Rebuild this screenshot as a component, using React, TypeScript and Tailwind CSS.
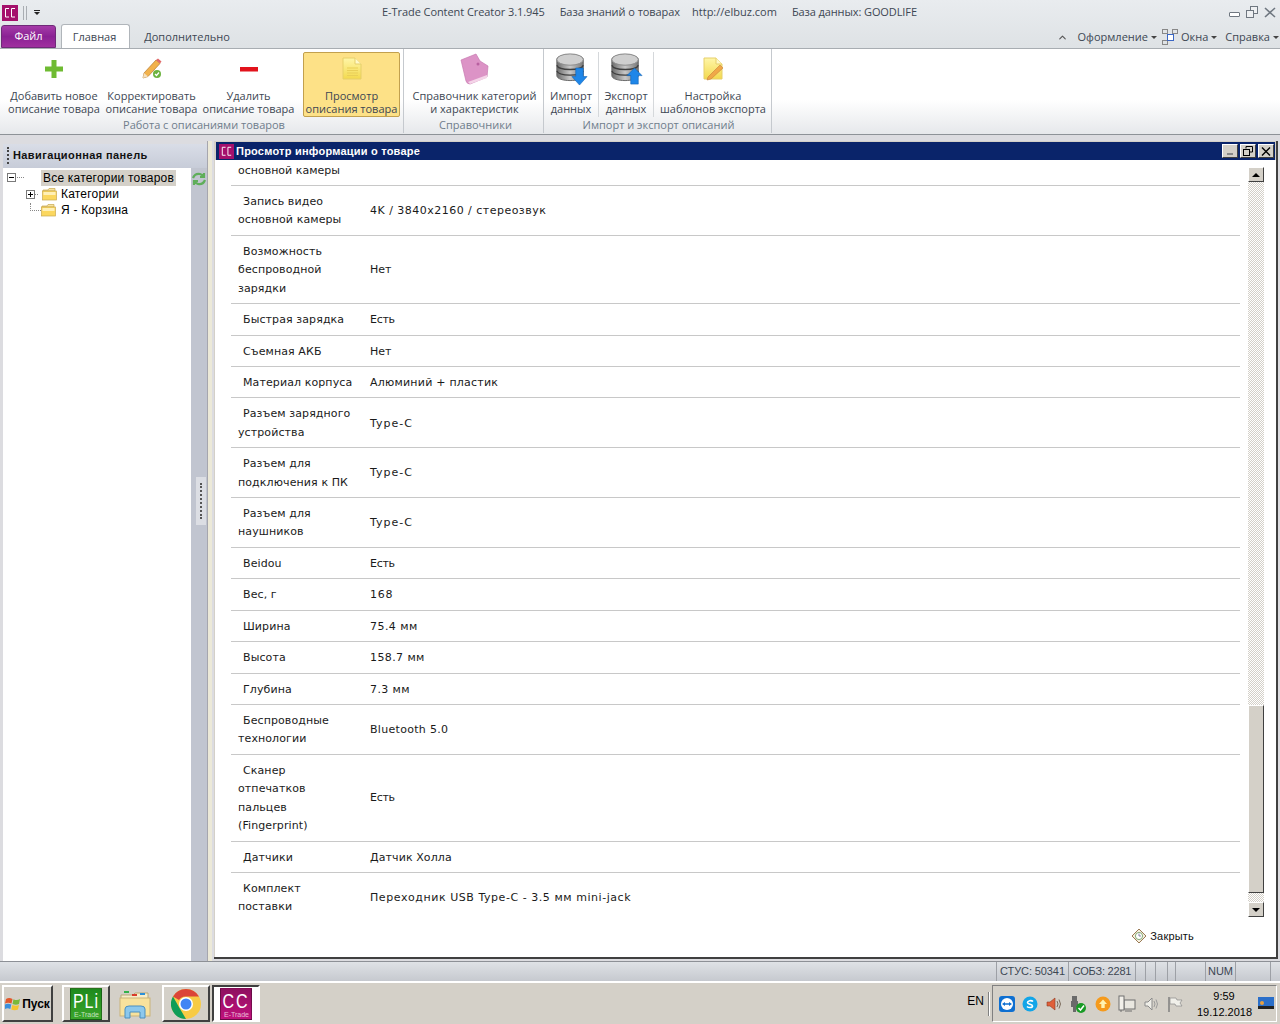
import { ChevronUp } from "lucide-react";
import type { ReactNode } from "react";

const rows: { label: string[]; value: string; cls?: string }[] = [
  { label: ["Запись видео", "основной камеры"], value: "4K / 3840x2160 / стереозвук", cls: "tracking-[0.48px]" },
  { label: ["Возможность", "беспроводной", "зарядки"], value: "Нет" },
  { label: ["Быстрая зарядка"], value: "Есть", cls: "tracking-[-0.3px]" },
  { label: ["Съемная АКБ"], value: "Нет" },
  { label: ["Материал корпуса"], value: "Алюминий + пластик", cls: "tracking-[0.22px]" },
  { label: ["Разъем зарядного", "устройства"], value: "Type-C", cls: "tracking-[1px]" },
  { label: ["Разъем для", "подключения к ПК"], value: "Type-C", cls: "tracking-[1px]" },
  { label: ["Разъем для", "наушников"], value: "Type-C", cls: "tracking-[1px]" },
  { label: ["Beidou"], value: "Есть", cls: "tracking-[-0.3px]" },
  { label: ["Вес, г"], value: "168", cls: "tracking-[0.7px]" },
  { label: ["Ширина"], value: "75.4 мм", cls: "tracking-[0.45px]" },
  { label: ["Высота"], value: "158.7 мм", cls: "tracking-[0.4px]" },
  { label: ["Глубина"], value: "7.3 мм", cls: "tracking-[0.4px]" },
  { label: ["Беспроводные", "технологии"], value: "Bluetooth 5.0", cls: "tracking-[0.3px]" },
  { label: ["Сканер", "отпечатков", "пальцев", "(Fingerprint)"], value: "Есть", cls: "tracking-[-0.3px]" },
  { label: ["Датчики"], value: "Датчик Холла", cls: "tracking-[0.1px]" },
  { label: ["Комплект", "поставки"], value: "Переходник USB Type-C - 3.5 мм mini-jack", cls: "tracking-[0.55px]" },
];

const raised =
  "border border-t-white border-l-white border-r-[#404040] border-b-[#404040] bg-[#d4d0c8]";

function CcLogo({ size = 16 }: { size?: number }) {
  return (
    <svg width={size} height={size} viewBox="0 0 16 16" className="shrink-0">
      <rect width="16" height="16" fill="#a5106c" />
      <path d="M7 3.5H3.5V12H7M13 3.5H9.5V12H13" fill="none" stroke="#fff" strokeWidth="1" />
    </svg>
  );
}

function RibbonButton({
  icon,
  lines,
  width,
  active,
}: {
  icon: ReactNode;
  lines: string[];
  width: number;
  active?: boolean;
}) {
  return (
    <div
      style={{ width }}
      className={`flex h-[65px] shrink-0 flex-col items-center ${
        active ? "rounded-[2px] border border-[#c2a04e] bg-[#fde187] pt-0" : "pt-[1px]"
      }`}
    >
      <div className="flex h-[31px] items-center justify-center">{icon}</div>
      <div className="mt-[5px] text-center text-[11px] leading-[13px] whitespace-nowrap text-[#3d4753]">
        {lines.map((l) => (
          <div key={l}>{l}</div>
        ))}
      </div>
    </div>
  );
}

function RibbonGroup({
  title,
  width,
  children,
  titleCls = "",
}: {
  title: string;
  width: number;
  children: ReactNode;
  titleCls?: string;
}) {
  return (
    <div style={{ width }} className="flex h-[84px] shrink-0 flex-col border-r border-[#c5c9ce]">
      <div className="flex h-[69px] items-start pt-[3px]">{children}</div>
      <div className={`text-center text-[11px] leading-[13px] text-[#6f7d8c] ${titleCls}`}>{title}</div>
    </div>
  );
}

function DbIcon({ up }: { up?: boolean }) {
  return (
    <svg width="34" height="34" viewBox="0 0 36 36">
      <defs>
        <linearGradient id={up ? "dbu" : "dbd"} x1="0" x2="1" y1="0" y2="0">
          <stop offset="0" stopColor="#6b6b6b" />
          <stop offset="0.5" stopColor="#c8c8c8" />
          <stop offset="1" stopColor="#777" />
        </linearGradient>
      </defs>
      <path d="M3 8C3 1 31 1 31 8V25C31 32 3 32 3 25Z" fill={`url(#${up ? "dbu" : "dbd"})`} stroke="#666" />
      <ellipse cx="17" cy="8" rx="14" ry="6" fill="#cfcfcf" stroke="#8a8a8a" />
      <path d="M3 14C5 20 29 20 31 14M3 20C5 26 29 26 31 20" fill="none" stroke="#3f3f3f" strokeWidth="1.5" />
      {up ? (
        <path d="M27 17L35 25H31V34H23V25H19Z" fill="#1e86e8" stroke="#0f62b5" strokeWidth="0.6" />
      ) : (
        <path d="M23 17H31V26H35L27 35L19 26H23Z" fill="#1e86e8" stroke="#0f62b5" strokeWidth="0.6" />
      )}
    </svg>
  );
}

function NoteIcon({ pencil }: { pencil?: boolean }) {
  return (
    <svg width="22" height="24" viewBox="0 0 22 24">
      <defs>
        <linearGradient id={pencil ? "nt2" : "nt1"} x1="0" x2="0" y1="0" y2="1">
          <stop offset="0" stopColor="#fff6a8" />
          <stop offset="1" stopColor="#f3d94e" />
        </linearGradient>
      </defs>
      <path d="M2 1H14L20 7V22H2Z" fill={`url(#${pencil ? "nt2" : "nt1"})`} stroke="#e6cf6a" />
      <path d="M14 1V7H20" fill="#fff9c9" stroke="#e6cf6a" />
      {pencil ? (
        <path d="M6 20L18 8L21 11L9 22L5 23Z" fill="#f0a848" stroke="#c9803a" strokeWidth="0.6" />
      ) : (
        <path d="M6 11H17M6 13.5H17M6 16H17M6 18.5H17" stroke="#e9cf58" />
      )}
    </svg>
  );
}

function FolderIcon() {
  return (
    <svg width="15" height="14" viewBox="0 0 15 14" className="shrink-0">
      <path d="M1 3H6L7 1.5H13V4H1Z" fill="#f7e4a0" stroke="#c9a84f" strokeWidth="0.7" />
      <rect x="0.5" y="4" width="14" height="9" fill="#fbd75f" stroke="#c9a84f" strokeWidth="0.7" />
      <rect x="1.5" y="5" width="12" height="3" fill="#fff0b8" />
    </svg>
  );
}

function TreeBox({ plus }: { plus?: boolean }) {
  return (
    <span className="relative block h-[9px] w-[9px] shrink-0 border border-[#7a7a7a] bg-white">
      <span className="absolute top-[3px] left-[1px] h-px w-[5px] bg-black" />
      {plus && <span className="absolute top-[1px] left-[3px] h-[5px] w-px bg-black" />}
    </span>
  );
}

function WinBtn({ children }: { children: ReactNode }) {
  return <div className={`flex h-[14px] w-[16px] items-center justify-center ${raised}`}>{children}</div>;
}

function Tile({ text, bg, trackCls }: { text: string; bg: string; trackCls: string }) {
  return (
    <div className={`flex h-[32px] w-[32px] flex-col items-center border border-black/30 leading-none text-white ${bg}`}>
      <span className={`mt-[3px] h-[18px] origin-top scale-y-[1.25] text-[16px] font-light ${trackCls}`}>{text}</span>
      <span className="mt-[1px] w-full pr-[2px] text-right text-[7px] text-white/70">E-Trade</span>
    </div>
  );
}

const tray = [
  <svg key="tv" width="16" height="16" viewBox="0 0 16 16">
    <rect width="16" height="16" rx="3" fill="#0e6fd1" />
    <circle cx="8" cy="8" r="6" fill="#fff" />
    <path d="M3 8L6 6V7.2H10V6L13 8L10 10V8.8H6V10Z" fill="#0e6fd1" />
  </svg>,
  <svg key="sk" width="16" height="16" viewBox="0 0 16 16">
    <circle cx="8" cy="8" r="7.5" fill="#12a5e8" />
    <path d="M11 5.5C9.5 4 5.5 4.5 5.5 6.5S10.5 8 10.5 10S6.5 12 5 10.5" fill="none" stroke="#fff" strokeWidth="1.6" />
  </svg>,
  <svg key="vol" width="16" height="16" viewBox="0 0 16 16">
    <path d="M1 6H4L9 2V14L4 10H1Z" fill="#e0603a" stroke="#8f3a22" strokeWidth="0.6" />
    <path d="M11 5Q13 8 11 11M13 3.5Q16 8 13 12.5" fill="none" stroke="#7a6a5a" />
  </svg>,
  <svg key="usb" width="18" height="18" viewBox="0 0 18 18">
    <path d="M3 1H8V6H9V12H7V17H4V12H2V6H3Z" fill="#6a6a6a" />
    <circle cx="12" cy="13" r="5" fill="#189a24" />
    <path d="M9.5 13L11.5 15L15 10.5" fill="none" stroke="#fff" strokeWidth="1.5" />
  </svg>,
  <svg key="up" width="16" height="16" viewBox="0 0 16 16">
    <circle cx="8" cy="8" r="7.5" fill="#f59a1c" />
    <path d="M8 3.5L12 8H9.7V12H6.3V8H4Z" fill="#fff3b0" />
  </svg>,
  <svg key="net" width="18" height="18" viewBox="0 0 18 18">
    <rect x="6" y="5" width="11" height="9" fill="#e9e7e0" stroke="#6f6f6f" />
    <rect x="1" y="1" width="5" height="14" fill="#f2f0ea" stroke="#6f6f6f" />
    <path d="M3 15V17M7 16H14" stroke="#6f6f6f" />
  </svg>,
  <svg key="snd" width="16" height="16" viewBox="0 0 16 16">
    <path d="M1 6H4L8 2V14L4 10H1Z" fill="#efeee8" stroke="#8b8b8b" />
    <path d="M10 5Q12 8 10 11M12 3.5Q15 8 12 12.5" fill="none" stroke="#9b9b9b" />
  </svg>,
  <svg key="flag" width="16" height="16" viewBox="0 0 16 16">
    <path d="M2 1V16" stroke="#7a7a7a" strokeWidth="1.4" />
    <path d="M3 2H9L10 4H15L13 7L15 10H9L8 8H3Z" fill="#f1f0ea" stroke="#8a8a8a" strokeWidth="0.7" />
  </svg>,
];

export default function App() {
  return (
    <div className="flex h-[1024px] w-[1280px] flex-col overflow-hidden bg-[#d4d0c8] font-['Open_Sans','Noto_Sans',sans-serif]">
      {/* title + tabs */}
      <div className="h-[48px] shrink-0 bg-gradient-to-b from-[#e9ecef] to-[#dee2e5]">
        <div className="relative flex h-[25px] items-center pl-[2px]">
          <CcLogo />
          <div className="ml-[5px] h-[14px] w-[4px] border-x border-[#a9adb2]" />
          <div className="ml-[7px] flex flex-col items-center gap-[1px]">
            <span className="h-px w-[6px] bg-[#222]" />
            <span className="h-0 w-0 border-x-[3px] border-t-[3px] border-x-transparent border-t-[#222]" />
          </div>
          <div className="absolute top-[4px] left-[382px] flex text-[11px] leading-[16px] whitespace-nowrap text-[#3d4753]">
            <span className="tracking-[-0.07px]">E-Trade Content Creator 3.1.945</span>
            <span className="ml-[15px] tracking-[-0.06px]">База знаний о товарах</span>
            <span className="ml-[12px]">http://elbuz.com</span>
            <span className="ml-[15px] tracking-[-0.1px]">База данных: GOODLIFE</span>
          </div>
          <div className="absolute top-[6px] right-[4px] flex items-center gap-[6px] text-[#5f6872]">
            <span className="mt-[5px] h-[5px] w-[11px] rounded-[1px] border border-[#6f7780] bg-white" />
            <svg width="12" height="12" viewBox="0 0 12 12" fill="none" stroke="#6f7780">
              <rect x="4.5" y="0.5" width="7" height="7" fill="#eef0f2" />
              <rect x="0.5" y="4.5" width="7" height="7" fill="#eef0f2" />
            </svg>
            <svg width="12" height="11" viewBox="0 0 12 11" fill="none" stroke="#6f7780" strokeWidth="1.6">
              <path d="M1 1L11 10M11 1L1 10" />
            </svg>
          </div>
        </div>
        <div className="relative flex h-[23px] items-end pl-[1px]">
          <div className="flex h-[23px] w-[55px] items-center justify-center rounded-t-[3px] border border-[#6f2a78] bg-gradient-to-b from-[#a63ba8] via-[#8a2194] to-[#a0309f] text-[11px] text-white">
            Файл
          </div>
          <div className="z-10 ml-[5px] flex h-[24px] w-[69px] items-center justify-center rounded-t-[3px] border border-b-0 border-[#b0b5ba] bg-white pt-[2px] pr-[2px] text-[11px] text-[#3d4753]">
            Главная
          </div>
          <div className="flex h-[23px] w-[114px] items-center justify-center pt-[2px] text-[11px] text-[#3d4753]">
            Дополнительно
          </div>
          <div className="absolute top-[4px] right-[1px] flex items-center text-[11px] leading-[16px] whitespace-nowrap text-[#3d4753]">
            <ChevronUp size={11} strokeWidth={2.4} className="mr-[10px] text-[#555]" />
            <span>Оформление</span>
            <span className="mx-[3px] h-0 w-0 border-x-[3px] border-t-[3px] border-x-transparent border-t-[#444]" />
            <svg width="16" height="16" viewBox="0 0 16 16" className="mx-[2px]" fill="none" stroke="#888">
              <rect x="0.5" y="0.5" width="5" height="4" />
              <rect x="10.5" y="0.5" width="5" height="4" />
              <rect x="0.5" y="11.5" width="5" height="4" />
              <rect x="5.5" y="5.5" width="6" height="6" fill="#fff" stroke="#3a66c4" />
            </svg>
            <span className="ml-[1px]">Окна</span>
            <span className="mx-[3px] h-0 w-0 border-x-[3px] border-t-[3px] border-x-transparent border-t-[#444]" />
            <span className="ml-[5px]">Справка</span>
            <span className="ml-[3px] h-0 w-0 border-x-[3px] border-t-[3px] border-x-transparent border-t-[#444]" />
          </div>
        </div>
      </div>

      {/* ribbon */}
      <div className="flex h-[87px] shrink-0 border-y border-t-[#a8adb2] border-b-[#8d9297] bg-gradient-to-b from-white from-60% to-[#e6e8eb] pl-[5px]">
        <RibbonGroup title="Работа с описаниями товаров" width={399}>
          <RibbonButton
            width={98}
            lines={["Добавить новое", "описание товара"]}
            icon={
              <svg width="20" height="20" viewBox="0 0 20 20">
                <path d="M7.5 1H12.5V7.5H19V12.5H12.5V19H7.5V12.5H1V7.5H7.5Z" fill="#6fbb32" />
              </svg>
            }
          />
          <RibbonButton
            width={97}
            lines={["Корректировать", "описание товара"]}
            icon={
              <svg width="22" height="22" viewBox="0 0 22 22">
                <path d="M2 20L3 15L15 2L19 5.5L7 18.5Z" fill="#f2b24c" stroke="#b57a30" strokeWidth="0.7" />
                <path d="M15 2L17 0.5L20.5 3.5L19 5.5Z" fill="#e06a6a" />
                <path d="M2 20L3 15L7 18.5Z" fill="#f5e2c0" />
                <circle cx="16" cy="16" r="4" fill="#6cb33f" />
                <path d="M14 16L15.5 17.5L18 14.5" fill="none" stroke="#fff" strokeWidth="1.2" />
              </svg>
            }
          />
          <RibbonButton
            width={97}
            lines={["Удалить", "описание товара"]}
            icon={
              <svg width="20" height="20" viewBox="0 0 20 20">
                <rect x="1" y="8" width="18" height="4.5" fill="#e2131c" />
              </svg>
            }
          />
          <div className="ml-[6px]">
            <RibbonButton width={97} active lines={["Просмотр", "описания товара"]} icon={<NoteIcon />} />
          </div>
        </RibbonGroup>
        <RibbonGroup title="Справочники" width={140} titleCls="pl-[4px]">
          <RibbonButton
            width={141}
            lines={["Справочник категорий", "и характеристик"]}
            icon={
              <svg width="30" height="32" viewBox="0 0 30 32">
                <path d="M1 7L16 1L20 8L28 13L27 24L10 31Q7 31 6 28Z" fill="#dc93c6" stroke="#c77ab0" strokeWidth="0.7" />
                <path d="M8 29L27 22V25L10 31Z" fill="#f4d4e8" />
                <circle cx="18" cy="11" r="1.5" fill="#b860a0" />
              </svg>
            }
          />
        </RibbonGroup>
        <RibbonGroup title="Импорт и экспорт описаний" width={228} titleCls="pl-[2px]">
          <div className="flex h-[65px] w-[55px] justify-center border-r border-[#d5d8db]">
            <RibbonButton width={56} lines={["Импорт", "данных"]} icon={<DbIcon />} />
          </div>
          <div className="flex h-[65px] w-[55px] justify-center border-r border-[#d5d8db]">
            <RibbonButton width={54} lines={["Экспорт", "данных"]} icon={<DbIcon up />} />
          </div>
          <RibbonButton width={118} lines={["Настройка", "шаблонов экспорта"]} icon={<NoteIcon pencil />} />
        </RibbonGroup>
      </div>

      {/* main */}
      <div className="flex h-[826px] shrink-0 bg-[#dcdce0] pt-[6px]">
        <div className="ml-[3px] flex h-[820px] w-[204px] shrink-0 flex-col pt-[3px]">
          <div className="flex h-[24px] shrink-0 items-center bg-gradient-to-b from-[#d9dde7] to-[#c7ccd8] pb-[2px] pl-[4px]">
            <span className="mr-[4px] h-[17px] w-[2px] border-l-2 border-dotted border-[#444]" />
            <span className="font-['Liberation_Sans',sans-serif] text-[11px] font-bold tracking-[0.4px] whitespace-nowrap text-[#111]">
              Навигационная панель
            </span>
          </div>
          <div className="flex min-h-0 flex-1">
            <div className="w-[188px] bg-white pt-[1px] font-['Liberation_Sans',sans-serif] text-[12px] tracking-[0.2px] text-black">
              <div className="flex h-[17px] items-center pl-[4px]">
                <TreeBox />
                <span className="ml-[1px] w-[7px] border-t border-dotted border-[#888]" />
                <span className="ml-[17px] bg-[#d4d0c8] px-[2px] leading-[16px] whitespace-nowrap">Все категории товаров</span>
              </div>
              <div className="relative flex h-[16px] items-center pl-[23px]">
                <TreeBox plus />
                <span className="w-[3px] border-t border-dotted border-[#888]" />
                <span className="ml-[4px]"><FolderIcon /></span>
                <span className="ml-[4px]">Категории</span>
              </div>
              <div className="flex h-[16px] items-center pl-[27px]">
                <span className="mt-[-7px] h-[8px] w-[11px] border-b border-l border-dotted border-[#888]" />
                <FolderIcon />
                <span className="ml-[5px]">Я - Корзина</span>
              </div>
            </div>
            <div className="flex w-[16px] flex-col items-center bg-[#c1c5d0] pt-[3px]">
              <svg width="16" height="16" viewBox="0 0 16 16" fill="none" stroke="#5fae5a" strokeWidth="2.2">
                <path d="M2 7Q4 2 9 3L13 5M13 2V6H9" />
                <path d="M14 9Q12 14 7 13L3 11M3 14V10H7" />
              </svg>
              <div className="mt-[290px] ml-[3px] flex h-[48px] w-[10px] justify-center bg-[#dcdee4] pt-[6px]">
                <span className="h-[36px] border-l-2 border-dotted border-[#555]" />
              </div>
            </div>
          </div>
        </div>
        <div className="w-[5px] shrink-0 border-l border-[#a6a6ae] bg-[#ece9d8]" />
        <div className="ml-[2px] flex h-[818px] w-[1064px] shrink-0 flex-col border-r-2 border-b-2 border-[#404040] bg-[#d4d0c8] pt-[1px] pl-[1px]">
          <div className="mx-[1px] flex h-[18px] shrink-0 items-center bg-[#0a246a] pr-[1px] pl-[3px] font-['Liberation_Sans',sans-serif]">
            <CcLogo size={15} />
            <span className="ml-[2px] flex-1 text-[11px] font-bold tracking-[0.22px] text-white">
              Просмотр информации о товаре
            </span>
            <div className="flex gap-[2px]">
              <WinBtn>
                <span className="mt-[6px] h-[2px] w-[6px] bg-[#888]" />
              </WinBtn>
              <WinBtn>
                <svg width="10" height="10" viewBox="0 0 10 10" fill="none" stroke="#000">
                  <path d="M3 2.5V0.5H9.5V6H7" strokeWidth="1" />
                  <rect x="0.5" y="3.5" width="6" height="6" />
                </svg>
              </WinBtn>
              <WinBtn>
                <svg width="10" height="9" viewBox="0 0 10 9" stroke="#000" strokeWidth="1.4">
                  <path d="M1 0.5L9 8.5M9 0.5L1 8.5" />
                </svg>
              </WinBtn>
            </div>
          </div>
          <div className="relative flex min-h-0 flex-1 flex-col bg-white font-['DejaVu_Sans',sans-serif] text-[11px] leading-[18.42px] text-[#1a1a1a]">
            <div className="ml-[16px] h-[760px] w-[1009px] shrink-0 overflow-hidden">
              <div className="flex h-[26px] items-end border-b border-[#c8c8c8] pb-[5px] pl-[7px]">
                основной камеры
              </div>
              {rows.map((r, i) => (
                <div
                  key={r.label[0] + r.value}
                  className={`flex items-center pt-[7px] pb-[5px] ${
                    i < rows.length - 1 ? "border-b border-[#c8c8c8]" : ""
                  }`}
                >
                  <div className="w-[139px] shrink-0 pl-[7px] tracking-[0.1px]">
                    {r.label.map((l, j) => (
                      <div key={l} className={j === 0 ? "pl-[5px]" : ""}>
                        {l}
                      </div>
                    ))}
                  </div>
                  <div className={r.cls}>{r.value}</div>
                </div>
              ))}
            </div>
            <div className="flex h-[37px] shrink-0 items-start justify-end pt-[7px] pr-[82px] font-['Liberation_Sans',sans-serif] text-[11px] tracking-[0.2px]">
              <svg width="16" height="16" viewBox="0 0 16 16" className="mt-[1px] mr-[3px]">
                <path d="M8 1L15 8L8 15L1 8Z" fill="#f6efdf" stroke="#9a7a55" />
                <circle cx="8" cy="8" r="3.6" fill="#fff" stroke="#6a9a5a" strokeWidth="0.8" />
                <path d="M8 5.5V8H10" stroke="#558" strokeWidth="0.7" fill="none" />
              </svg>
              <span className="leading-[18px] text-[#111]">Закрыть</span>
            </div>
            {/* scrollbar */}
            <div className="absolute top-[7px] left-[1033px] flex h-[750px] w-[16px] flex-col">
              <div className={`flex h-[15px] items-center justify-center ${raised}`}>
                <span className="h-0 w-0 border-x-[4px] border-b-[4px] border-x-transparent border-b-black" />
              </div>
              <div className="h-[523px] bg-[repeating-conic-gradient(#d4d0c8_0_25%,#fff_0_50%)] bg-[length:2px_2px]" />
              <div className={`h-[188px] ${raised}`} />
              <div className="h-[9px] bg-[repeating-conic-gradient(#d4d0c8_0_25%,#fff_0_50%)] bg-[length:2px_2px]" />
              <div className={`flex h-[15px] items-center justify-center ${raised}`}>
                <span className="h-0 w-0 border-x-[4px] border-t-[4px] border-x-transparent border-t-black" />
              </div>
            </div>
          </div>
        </div>
      </div>

      {/* status bar */}
      <div className="flex h-[20px] shrink-0 border-t border-[#8d9096] bg-gradient-to-b from-[#dfe2e6] to-[#c6c9cf] font-['Liberation_Sans',sans-serif] text-[11px] leading-[19px] text-[#3d4753]">
        <div className="w-[996px] shrink-0" />
        {[
          [72, "СТУС: 50341", "tracking-[-0.1px]"],
          [67, "СОБЗ: 2281", "tracking-[-0.2px]"],
          [10, "", ""],
          [10, "", ""],
          [12, "", ""],
          [8, "", ""],
          [30, "", ""],
          [30, "NUM", ""],
          [35, "", ""],
        ].map(([w, t, c], i) => (
          <div
            key={i}
            style={{ width: w as number }}
            className={`shrink-0 border-l border-[#9da0a6] text-center whitespace-nowrap ${c}`}
          >
            {t}
          </div>
        ))}
        <div className="flex-1 border-l border-[#9da0a6]" />
      </div>

      {/* taskbar */}
      <div className="flex h-[43px] shrink-0 items-center border-t-2 border-white bg-[#d4d0c8] pl-[2px] font-['Liberation_Sans',sans-serif]">
        <div className={`flex h-[37px] w-[51px] items-center justify-center gap-[1px] border-2 ${raised}`}>
          <svg width="16" height="16" viewBox="0 0 16 16">
            <path d="M1 3Q4 1 7.5 3L6.5 7.5Q3 6 0 7.5Z" fill="#e2582c" />
            <path d="M8.5 3.2Q12 5 15 3L14 8Q11 9.5 7.5 8Z" fill="#79b93a" />
            <path d="M0 8.5Q3 7 6.3 8.5L5.3 13Q2.5 11.5 0 13Z" fill="#3a8fdc" />
            <path d="M7.3 9Q11 10.5 14 9L13 13.5Q9.5 15 6.3 13.5Z" fill="#f4c430" />
          </svg>
          <span className="text-[12px] font-bold text-black">Пуск</span>
        </div>
        <div className={`ml-[9px] flex h-[37px] w-[48px] items-center justify-center border-2 ${raised}`}>
          <Tile text="PLi" bg="bg-gradient-to-b from-[#1d8a1d] to-[#3aa52a]" trackCls="tracking-[1px]" />
        </div>
        <div className="flex h-[37px] w-[50px] items-center justify-center">
          <svg width="32" height="32" viewBox="0 0 32 32">
            <path d="M2 7H14L16 5H29V12H2Z" fill="#f7edc8" stroke="#b9a878" />
            <rect x="5" y="3" width="5" height="2" fill="#33b24a" />
            <rect x="13" y="6" width="5" height="2" fill="#d93a2b" />
            <rect x="21" y="5" width="5" height="2" fill="#2b90d9" />
            <rect x="1" y="10" width="30" height="18" fill="#f8e29c" stroke="#c9b37a" />
            <path d="M6 30V21Q6 18 10 18H22Q26 18 26 21V30H21V24H11V30Z" fill="#8cc8ec" stroke="#4a8fc0" />
          </svg>
        </div>
        <div className={`ml-[2px] flex h-[37px] w-[48px] items-center justify-center border-2 ${raised}`}>
          <svg width="30" height="30" viewBox="0 0 30 30">
            <circle cx="15" cy="15" r="15" fill="#f7cb45" />
            <path d="M15 0A15 15 0 0 1 28 7.5H15A7.5 7.5 0 0 0 8 11L2 7.5A15 15 0 0 1 15 0Z" fill="#db4437" />
            <path d="M2 7.5L8.5 19L15 30A15 15 0 0 1 2 7.5Z" fill="#0f9d58" />
            <circle cx="15" cy="15" r="7" fill="#fff" />
            <circle cx="15" cy="15" r="5.5" fill="#4285f4" />
          </svg>
        </div>
        <div className="ml-[2px] flex h-[37px] w-[48px] items-center justify-center border-2 border-t-[#404040] border-r-white border-b-white border-l-[#404040] bg-white">
          <Tile text="CC" bg="bg-gradient-to-b from-[#8f1060] to-[#c0107c]" trackCls="tracking-[2px]" />
        </div>
        <div className="flex-1" />
        <span className="mr-[4px] mb-[5px] text-[12px] text-black">EN</span>
        <span className="mr-[2px] h-[24px] w-[2px] border-r border-l border-r-white border-l-[#808080]" />
        <div className="mr-[3px] flex h-[37px] w-[285px] items-center border border-t-[#808080] border-r-white border-b-white border-l-[#808080] pl-[6px]">
          <div className="flex w-[195px] items-center justify-between pr-[11px]">{tray}</div>
          <div className="ml-[3px] w-[54px] text-center text-[11px] leading-[16px] text-black">
            <div>9:59</div>
            <div>19.12.2018</div>
          </div>
          <svg width="16" height="14" viewBox="0 0 16 14" className="ml-[7px]">
            <rect width="16" height="12" fill="#2b6fc9" />
            <rect y="9" width="16" height="3" fill="#222" />
            <circle cx="4" cy="6" r="2" fill="#e8a040" />
          </svg>
        </div>
      </div>
    </div>
  );
}
